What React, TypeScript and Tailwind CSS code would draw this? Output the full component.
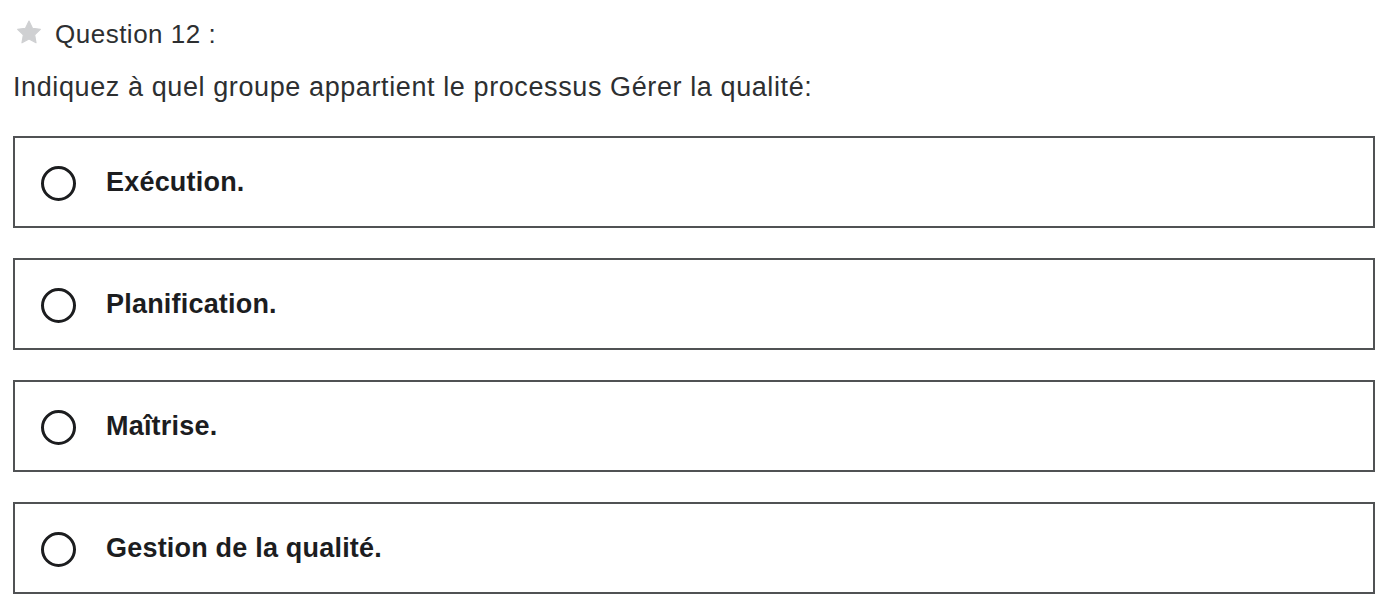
import React from "react";

const options = ["Exécution.", "Planification.", "Maîtrise.", "Gestion de la qualité."];

export default function App() {
  return (
    <div
      className="w-[1387px] h-[605px] bg-white pl-[13px] pr-[12px] pt-[21px] overflow-hidden"
      style={{ fontFamily: '"Liberation Sans", Arial, sans-serif' }}
    >
      <div className="flex items-center h-[26px]">
        <svg width="28" height="27" viewBox="0 0 24 24" className="ml-[2px] mb-[4px]">
          <path
            d="M12 1.8l3.1 6.4 7 1-5.05 4.95 1.2 7L12 17.85 5.75 21.15l1.2-7L1.9 9.2l7-1L12 1.8z"
            fill="#cfd0d2"
            stroke="#cfd0d2"
            strokeWidth="1"
            strokeLinejoin="round"
          />
        </svg>
        <span className="ml-[12px] text-[26px] leading-[26px] tracking-[0.5px] text-[#2d2f31]">
          Question 12 :
        </span>
      </div>
      <div className="mt-[27px] text-[27px] leading-[27px] tracking-[0.6px] text-[#2d2f31]">
        Indiquez à quel groupe appartient le processus Gérer la qualité:
      </div>
      <div className="mt-[35px] flex flex-col gap-[30px]">
        {options.map((o) => (
          <div
            key={o}
            className="h-[92px] border-2 border-[#505254] flex items-center pl-[26px]"
          >
            <div className="w-[35px] h-[35px] rounded-full border-[3px] border-[#1c1d1f] mt-[3px]" />
            <span className="ml-[30px] text-[27px] leading-[27px] font-bold tracking-[0.2px] text-[#1c1d1f]">
              {o}
            </span>
          </div>
        ))}
      </div>
    </div>
  );
}
